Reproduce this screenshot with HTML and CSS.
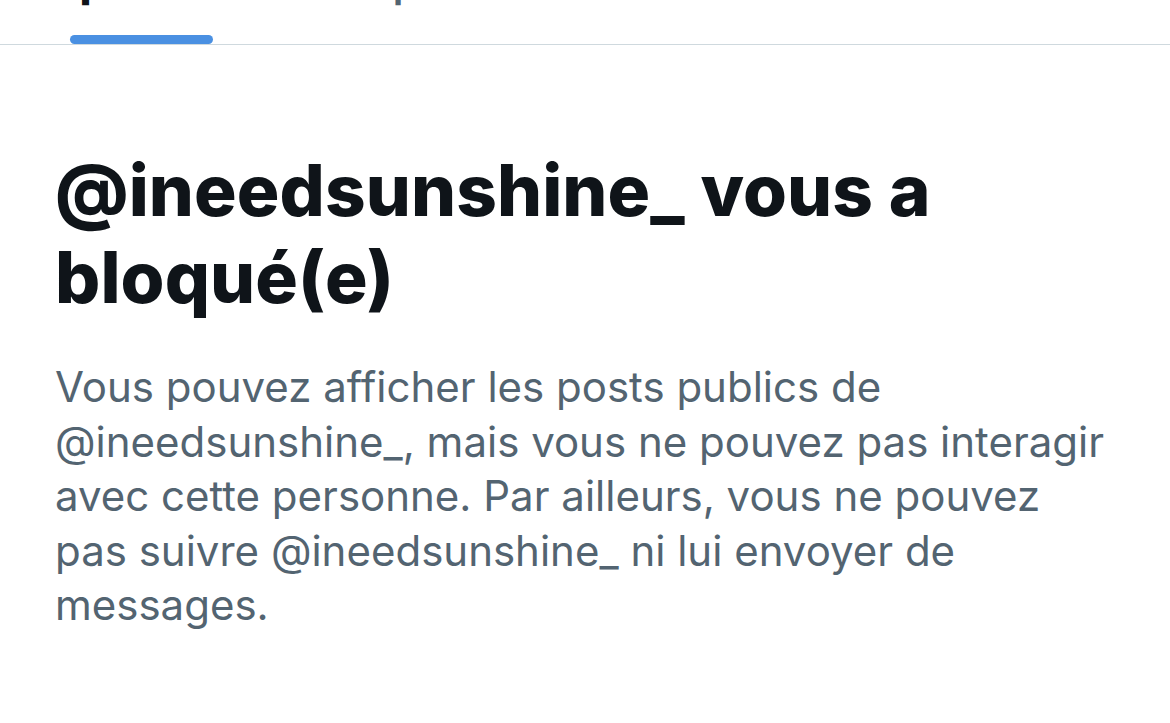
FILE: index.html
```html
<!DOCTYPE html>
<html lang="fr">
<head>
<meta charset="utf-8">
<link rel="stylesheet" href="styles.css">
</head>
<body>
<div class="tabs">
  <div class="tab tab-active">
    <span class="tab-label">p</span>
    <span class="indicator"></span>
  </div>
  <div class="tab">
    <span class="tab-label tab-label-muted">p</span>
  </div>
</div>
<main class="content">
  <h1 class="title">@ineedsunshine_ vous a bloqué(e)</h1>
  <p class="desc">Vous pouvez afficher les posts publics de @ineedsunshine_, mais vous ne pouvez pas interagir avec cette personne. Par ailleurs, vous ne pouvez pas suivre @ineedsunshine_ ni lui envoyer de messages.</p>
</main>
</body>
</html>
```
FILE: styles.css
```css
* { box-sizing: border-box; }
html, body {
  margin: 0;
  padding: 0;
  background: #ffffff;
  width: 1170px;
  height: 723px;
  overflow: hidden;
  font-family: Inter, "Liberation Sans", sans-serif;
}
.tabs {
  display: flex;
  height: 45px;
  border-bottom: 1px solid #cfd9de;
  padding-left: 70px;
}
.tab {
  position: relative;
  height: 44px;
}
.tab-active {
  width: 143px;
}
.tab-label {
  position: absolute;
  top: -45px;
  left: 9px;
  font-size: 48px;
  line-height: 48px;
  font-weight: 700;
  color: #0f1419;
}
.tab-label-muted {
  left: 179px;
  color: #536471;
  font-weight: 500;
}
.indicator {
  position: absolute;
  left: 0;
  bottom: 0;
  width: 143px;
  height: 9px;
  border-radius: 5px;
  background: #4a90e2;
}
.content {
  padding: 0 55px;
}
.title {
  margin: 102px 0 0 0;
  font-size: 71px;
  line-height: 87px;
  font-weight: 800;
  letter-spacing: 0.1px;
  color: #0f1419;
  width: 1000px;
}
.desc {
  margin: 39px 0 0 0;
  font-size: 42px;
  line-height: 54.5px;
  font-weight: 400;
  color: #536471;
  width: 1060px;
}
```
